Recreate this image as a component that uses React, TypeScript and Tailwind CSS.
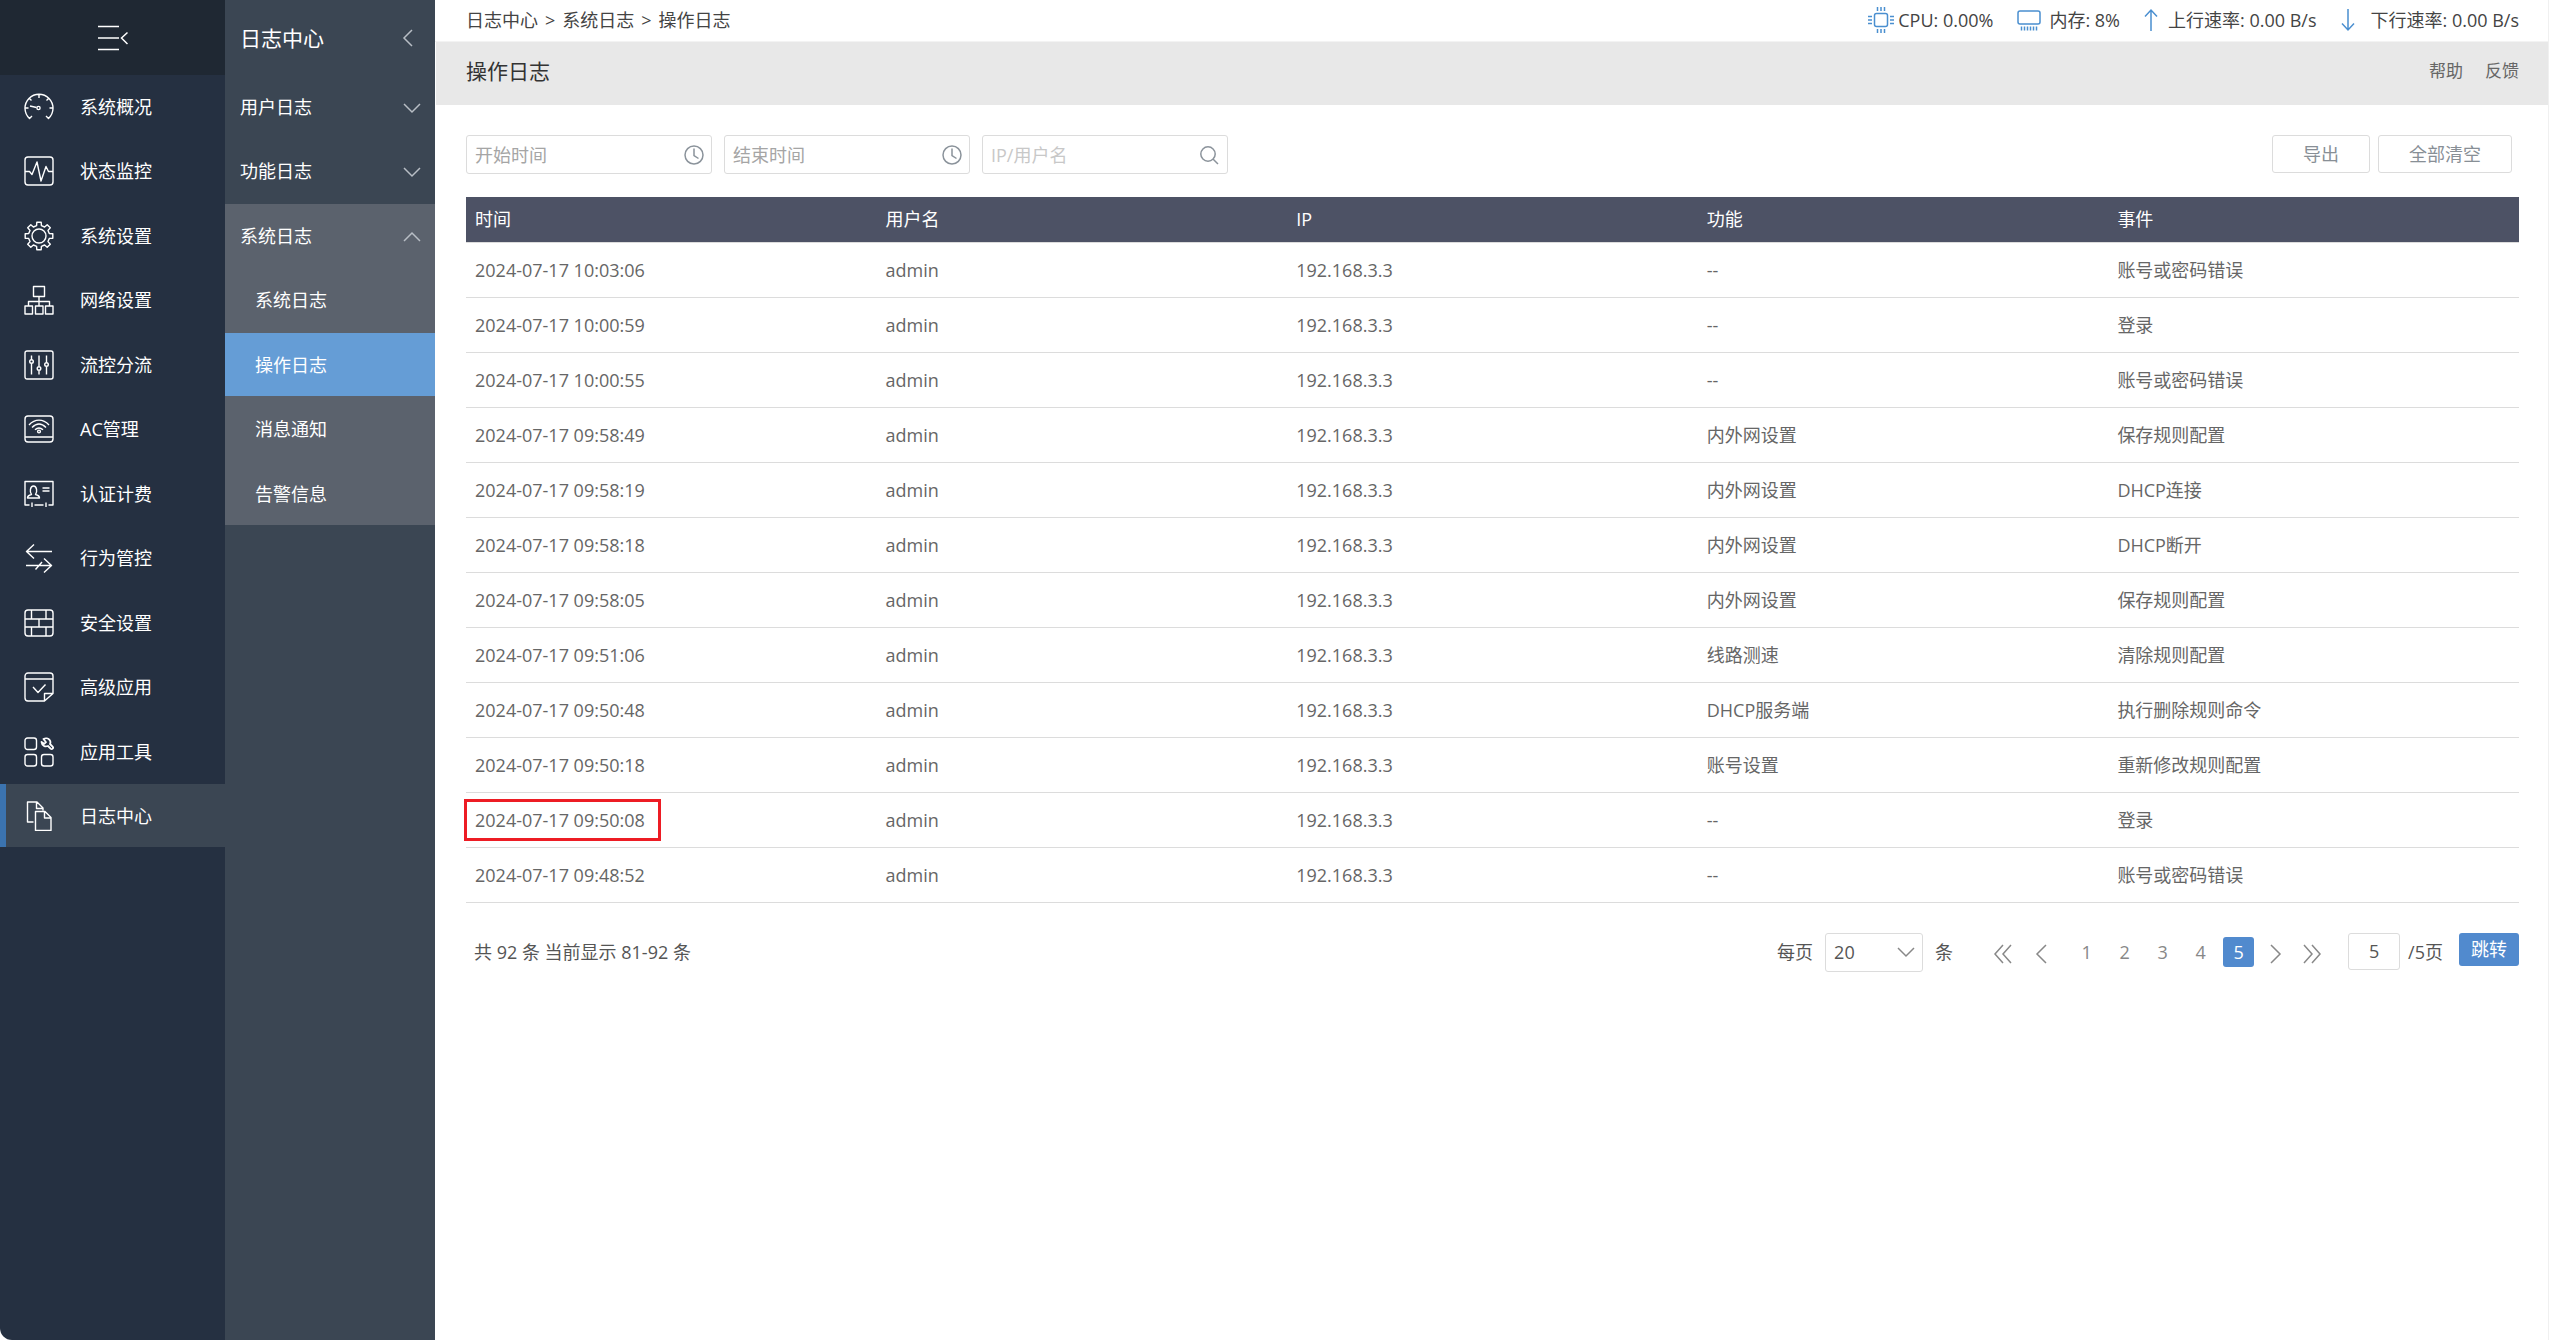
import type { ReactNode } from "react";

type Log = { time: string; user: string; ip: string; feature: string; event: string };

const LOGS: Log[] = [
  { time: "2024-07-17 10:03:06", user: "admin", ip: "192.168.3.3", feature: "--", event: "账号或密码错误" },
  { time: "2024-07-17 10:00:59", user: "admin", ip: "192.168.3.3", feature: "--", event: "登录" },
  { time: "2024-07-17 10:00:55", user: "admin", ip: "192.168.3.3", feature: "--", event: "账号或密码错误" },
  { time: "2024-07-17 09:58:49", user: "admin", ip: "192.168.3.3", feature: "内外网设置", event: "保存规则配置" },
  { time: "2024-07-17 09:58:19", user: "admin", ip: "192.168.3.3", feature: "内外网设置", event: "DHCP连接" },
  { time: "2024-07-17 09:58:18", user: "admin", ip: "192.168.3.3", feature: "内外网设置", event: "DHCP断开" },
  { time: "2024-07-17 09:58:05", user: "admin", ip: "192.168.3.3", feature: "内外网设置", event: "保存规则配置" },
  { time: "2024-07-17 09:51:06", user: "admin", ip: "192.168.3.3", feature: "线路测速", event: "清除规则配置" },
  { time: "2024-07-17 09:50:48", user: "admin", ip: "192.168.3.3", feature: "DHCP服务端", event: "执行删除规则命令" },
  { time: "2024-07-17 09:50:18", user: "admin", ip: "192.168.3.3", feature: "账号设置", event: "重新修改规则配置" },
  { time: "2024-07-17 09:50:08", user: "admin", ip: "192.168.3.3", feature: "--", event: "登录" },
  { time: "2024-07-17 09:48:52", user: "admin", ip: "192.168.3.3", feature: "--", event: "账号或密码错误" },
];

const MARKED_TIME = "2024-07-17 09:50:08";

const COLUMNS = ["时间", "用户名", "IP", "功能", "事件"];

const NAV: { label: string; icon: ReactNode }[] = [
  {
    label: "系统概况",
    icon: (
      <>
        <path d="M8 24 5.5 26.5A14 14 0 1 1 24.5 26.5L22 24M15 2v4M5.5 6.5l2 2M24.5 6.5l-2 2M1 16h3.5M29 16h-3.5M12.5 15.500 6 14" />
        <circle cx="14.5" cy="16" r="1.6" />
      </>
    ),
  },
  {
    label: "状态监控",
    icon: (
      <>
        <rect x="1" y="1" width="28" height="28" rx="3" />
        <path d="M1 15.5h4.5L8 18.5 13 6l4 19 5-14.5 2.5 5H29" />
      </>
    ),
  },
  {
    label: "系统设置",
    icon: (
      <>
        <circle cx="15" cy="15" r="7" />
        <path d="M12.6 4.7 12.8 1.2h4.4l.2 3.5L20.6 6l2.6-2.3 3.1 3.1L24 9.4l1.3 3.2 3.5.2v4.4l-3.5.2L24 20.6l2.3 2.6-3.1 3.1-2.6-2.3-3.2 1.3-.2 3.500h-4.4l-.2-3.500L9.400 24l-2.600 2.300-3.100-3.100L6 20.600l-1.300-3.200-3.500-.2v-4.400l3.500-.2L6 9.400 3.700 6.800l3.100-3.100L9.400 6z" />
      </>
    ),
  },
  {
    label: "网络设置",
    icon: <path d="M9.5 1.5h11v10h-11zM1 21h7.5v8H1zM11.5 21H19v8h-7.5zM21.5 21H29v8h-7.5zM15 11.5V21M4.5 21v-4.5h21V21" />,
  },
  {
    label: "流控分流",
    icon: (
      <>
        <rect x="1" y="1" width="28" height="28" rx="2" />
        <path d="M7.5 5.500v4M7.5 13.5v11M15 5.5V16M15 21v3.5M22.5 5.5v7M22.5 16.5v8" />
        <circle cx="7.5" cy="11.5" r="1.8" />
        <circle cx="15" cy="18.5" r="1.8" />
        <circle cx="22.5" cy="14.5" r="1.8" />
      </>
    ),
  },
  {
    label: "AC管理",
    icon: (
      <>
        <rect x="1" y="2" width="28" height="26" rx="3" />
        <path d="M1 23h28M5 11c6-6.5 14-6.5 20 0M8 13.5c4.5-4.5 9.5-4.5 14 0M11 15.8c2.5-2.3 5.5-2.3 8 0" />
        <circle cx="15" cy="17.5" r="1.4" />
      </>
    ),
  },
  {
    label: "认证计费",
    icon: (
      <>
        <path d="M5.5 26H1V2.5h28V26h-4.5M10.5 26h9M8 23.5V28M22 23.5V28M18.5 9h7M18.5 12h7" />
        <path d="M3.5 19c0-2.5 2-3 4-3.5-2-2.5-1.500-8.500 2-8.500s4 6 2 8.500c2 .5 4 1 4 3.500z" />
      </>
    ),
  },
  {
    label: "行为管控",
    icon: <path d="M28 8.5H2.5M10 1.5l-7.5 7 7.5 7M2 22.5h25.5M20 15.5l7.5 7-7.5 7M11.5 26.5 18 19" />,
  },
  {
    label: "安全设置",
    icon: (
      <>
        <rect x="1" y="2" width="28" height="26" rx="3" />
        <path d="M1 11h28M1 19h28M7.5 2v9M22 2v9M15 11v8M7.5 19v9M22 19v9" />
      </>
    ),
  },
  {
    label: "高级应用",
    icon: <path d="M20.5 29H4a3 3 0 0 1-3-3V4a3 3 0 0 1 3-3h22a3 3 0 0 1 3 3v17.5zM1 7h28M9 15l5 5.5 7.5-8M20.5 29v-7.5H29" />,
  },
  {
    label: "应用工具",
    icon: (
      <>
        <rect x="1" y="1" width="11.5" height="11.5" rx="2.5" />
        <rect x="1" y="17.5" width="11.5" height="11.5" rx="2.5" />
        <rect x="17.5" y="17.5" width="11.5" height="11.5" rx="2.5" />
        <path
          strokeWidth="1.8"
          d="M19.5 2c2-1 5-.8 6.300 1.200.8 1.300.7 2.800.2 3.800l2.600 2.600c1.300 1.500-.6 3.300-2 2L24 9c-2.500 1-6 .3-6.500-4l2.700 1.800 1.800-1.600z"
        />
      </>
    ),
  },
  {
    label: "日志中心",
    icon: <path d="M9.5 21h-6V1H13l6 6v2.5M12.5 1v6.5h6M11.5 10.5h9.500l6 6v13H11.5zM20.5 10.5V17H27" />,
  },
];

const ACTIVE_NAV = "日志中心";

const LOG_MENU = ["系统日志", "操作日志", "消息通知", "告警信息"];
const ACTIVE_LOG = "操作日志";

const CHEVRONS = {
  left: "M11 2 3 10l8 8",
  down: "M3 7l8 8 8-8",
  up: "M3 15l8-8 8 8",
};

function Chevron({ dir, className }: { dir: keyof typeof CHEVRONS; className: string }) {
  return (
    <svg viewBox="0 0 22 20" className={className} fill="none" stroke="currentColor" strokeWidth="1.5">
      <path d={CHEVRONS[dir]} />
    </svg>
  );
}

function PageArrow({ label, d, double }: { label: string; d: string; double?: boolean }) {
  return (
    <button aria-label={label} className="pt-1 text-[#888]">
      <svg
        viewBox={double ? "0 0 20 20" : "0 0 12 20"}
        className={double ? "h-5 w-5" : "h-5 w-3"}
        fill="none"
        stroke="currentColor"
        strokeWidth="1.5"
      >
        <path d={d} />
      </svg>
    </button>
  );
}

function Sidebar() {
  return (
    <aside className="w-[225px] shrink-0 rounded-bl-xl bg-[#253041] text-white">
      <button aria-label="收起菜单" className="flex h-[75px] w-full items-center justify-center bg-[#1f2833]">
        <svg viewBox="0 0 30 26" className="h-[26px] w-[30px]" fill="none" stroke="currentColor" strokeWidth="1.5">
          <path d="M0 1.5h21M0 13h21M0 24.5h21M29.5 7.500l-6 5.500 6 6" />
        </svg>
      </button>
      <nav>
        <ul>
          {NAV.map(({ label, icon }) => (
            <li key={label} className="mb-px even:mb-0.5">
              <a
                href="#"
                className={`flex h-[63px] items-center gap-[26px] ${
                  label === ACTIVE_NAV ? "border-l-6 border-[#3b73af] bg-[#3b4653] pl-[18px]" : "pl-6"
                }`}
              >
                <svg
                  viewBox="0 0 30 30"
                  className="size-[30px]"
                  fill="none"
                  stroke="currentColor"
                  strokeWidth="1.4"
                  strokeLinejoin="round"
                >
                  {icon}
                </svg>
                {label}
              </a>
            </li>
          ))}
        </ul>
      </nav>
    </aside>
  );
}

function SubMenu() {
  return (
    <aside className="w-[210px] shrink-0 bg-[#3b4653] text-white">
      <div className="flex h-[75px] items-center justify-between pr-3 pl-[15px] text-[21px]">
        日志中心
        <button aria-label="收起" className="text-[#b8bec5]">
          <Chevron dir="left" className="h-5 w-[22px]" />
        </button>
      </div>
      <button className="mb-px flex h-[63px] w-full items-center justify-between pr-3 pl-[15px]">
        用户日志
        <Chevron dir="down" className="h-5 w-[22px] text-[#b8bec5]" />
      </button>
      <button className="mb-0.5 flex h-[63px] w-full items-center justify-between pr-3 pl-[15px]">
        功能日志
        <Chevron dir="down" className="h-5 w-[22px] text-[#b8bec5]" />
      </button>
      <div className="bg-[#5b626d]">
        <button className="mb-px flex h-[63px] w-full items-center justify-between pr-3 pl-[15px]">
          系统日志
          <Chevron dir="up" className="h-5 w-[22px] text-[#b8bec5]" />
        </button>
        <ul>
          {LOG_MENU.map((label) => (
            <li key={label} className="mb-0.5 even:mb-px last:mb-0">
              <a
                href="#"
                className={`flex h-[63px] items-center pl-[30px] ${label === ACTIVE_LOG ? "bg-[#659dd6]" : ""}`}
              >
                {label}
              </a>
            </li>
          ))}
        </ul>
      </div>
    </aside>
  );
}

function TopBar() {
  return (
    <header className="flex h-[42px] items-center justify-between border-b border-[#f3f3f3] pr-[29px] pb-px pl-[31px] text-[#444]">
      <nav className="flex gap-[7px]">
        <a href="#">日志中心</a>
        <span>&gt;</span>
        <a href="#">系统日志</a>
        <span>&gt;</span>
        <a href="#">操作日志</a>
      </nav>
      <div className="flex gap-6">
        <span className="flex items-center gap-1">
          <svg viewBox="0 0 26 26" className="size-[26px] text-[#4a8fd0]" fill="none" stroke="currentColor" strokeWidth="1.5">
            <rect x="6.5" y="6.5" width="13" height="13" rx="2" />
            <path d="M9.5 0v4M13 0v4M16.500 0v4M9.5 22v4M13 22v4M16.5 22v4M0 9.5h4M0 13h4M0 16.5h4M22 9.5h4M22 13h4M22 16.5h4" />
          </svg>
          CPU: 0.00%
        </span>
        <span className="flex items-center gap-2">
          <svg viewBox="0 0 24 22" className="h-[22px] w-6 text-[#4a8fd0]" fill="none" stroke="currentColor" strokeWidth="1.5">
            <rect x="1" y="2" width="22" height="13" rx="2" />
            <path d="M4.500 17.5v4M7.500 17.5v4M10.500 17.5v4M13.500 17.5v4M16.500 17.5v4M19.500 17.5v4" />
          </svg>
          内存: 8%
        </span>
        <span className="flex items-center gap-2.5">
          <svg viewBox="0 0 14 24" className="h-6 w-3.5 text-[#4a8fd0]" fill="none" stroke="currentColor" strokeWidth="1.5">
            <path d="M7 23V2M1 8.5 7 2l6 6.5" />
          </svg>
          上行速率: 0.00 B/s
        </span>
        <span className="flex items-center gap-4">
          <svg viewBox="0 0 14 24" className="h-6 w-3.5 text-[#4a8fd0]" fill="none" stroke="currentColor" strokeWidth="1.5">
            <path d="M7 1v21M1 15.5 7 22l6-6.500" />
          </svg>
          下行速率: 0.00 B/s
        </span>
      </div>
    </header>
  );
}

function ClockIcon() {
  return (
    <svg viewBox="0 0 20 20" className="size-5 shrink-0 text-[#8b939b]" fill="none" stroke="currentColor" strokeWidth="1.5">
      <circle cx="10" cy="10" r="9" />
      <path d="M10 3.5v7l4.500 3" />
    </svg>
  );
}

function SearchIcon() {
  return (
    <svg viewBox="0 0 20 20" className="size-5 shrink-0 text-[#8b939b]" fill="none" stroke="currentColor" strokeWidth="1.5">
      <circle cx="8" cy="9" r="7.2" />
      <path d="M13 14l5 5" />
    </svg>
  );
}

function Filters() {
  const box = "flex h-[39px] w-[246px] items-center rounded-[3px] border border-[#dcdcdc] pr-[7px] pl-2";
  return (
    <div className="flex gap-3">
      <label className={box}>
        <input aria-label="开始时间" placeholder="开始时间" className="min-w-0 flex-1 outline-none placeholder:text-[#a5a5a5]" />
        <ClockIcon />
      </label>
      <label className={box}>
        <input aria-label="结束时间" placeholder="结束时间" className="min-w-0 flex-1 outline-none placeholder:text-[#a5a5a5]" />
        <ClockIcon />
      </label>
      <label className={box}>
        <input aria-label="IP/用户名" placeholder="IP/用户名" className="min-w-0 flex-1 outline-none placeholder:text-[#c8c8c8]" />
        <SearchIcon />
      </label>
      <div className="ml-auto flex gap-2 pr-[7px] text-[#888f96]">
        <button className="h-[38px] rounded-[3px] border border-[#dcdcdc] px-[30px]">导出</button>
        <button className="h-[38px] rounded-[3px] border border-[#dcdcdc] px-[30px]">全部清空</button>
      </div>
    </div>
  );
}

function LogTable() {
  return (
    <table className="mt-[23px] w-full table-fixed border-collapse text-left">
      <thead>
        <tr className="h-[45px] border-b border-[#dcdcdc] bg-[#4d5265] text-white">
          {COLUMNS.map((name) => (
            <th key={name} className="px-[9px] pb-px font-normal">
              {name}
            </th>
          ))}
        </tr>
      </thead>
      <tbody className="text-[#666]">
        {LOGS.map((log) => (
          <tr key={log.time} className="h-[55px] border-b border-[#dcdcdc]">
            <td className="px-[9px]">
              <span className="relative">
                {log.time}
                {log.time === MARKED_TIME && (
                  <span className="absolute -inset-y-[9px] -right-4 -left-[11px] border-3 border-[#ed1c24]" />
                )}
              </span>
            </td>
            <td className="px-[9px]">{log.user}</td>
            <td className="px-[9px]">{log.ip}</td>
            <td className="px-[9px]">{log.feature}</td>
            <td className="px-[9px]">{log.event}</td>
          </tr>
        ))}
      </tbody>
    </table>
  );
}

function Pagination() {
  return (
    <div className="mt-[30px] flex items-start justify-between pl-2 text-[#555]">
      <p className="leading-[39px]">共 92 条 当前显示 81-92 条</p>
      <div className="flex items-start">
        <label htmlFor="page-size" className="mr-3 leading-[39px]">
          每页
        </label>
        <div className="relative">
          <select id="page-size" defaultValue="20" className="h-[39px] w-[98px] appearance-none rounded-[3px] border border-[#dcdcdc] bg-white pl-2">
            <option>20</option>
          </select>
          <Chevron dir="down" className="pointer-events-none absolute top-2 right-1.5 h-5 w-[22px] text-[#888]" />
        </div>
        <span className="ml-3 leading-[39px]">条</span>
        <div className="ml-10 flex h-[39px] items-center">
          <PageArrow label="首页" double d="M10 1 2 10l8 9M18 1l-8 9 8 9" />
          <div className="ml-[22px] flex">
            <PageArrow label="上一页" d="M11 1 2 10l9 9" />
          </div>
          <div className="mr-4 ml-6 flex gap-[7px] text-[#888]">
            {[1, 2, 3, 4, 5].map((page) => (
              <button key={page} className={`h-[30px] w-[31px] rounded-[3px] ${page === 5 ? "bg-[#518ace] text-white" : ""}`}>
                {page}
              </button>
            ))}
          </div>
          <PageArrow label="下一页" d="M1 1l9 9-9 9" />
          <div className="ml-5 flex">
            <PageArrow label="末页" double d="M2 1l8 9-8 9M10 1l8 9-8 9" />
          </div>
        </div>
        <input aria-label="页码" defaultValue="5" className="ml-[26px] h-[37px] w-[52px] rounded-[3px] border border-[#dcdcdc] text-center" />
        <span className="ml-2 leading-[39px]">/5页</span>
        <button className="ml-4 h-[33px] w-[60px] rounded-[3px] bg-[#518ace] text-white">跳转</button>
      </div>
    </div>
  );
}

export default function App() {
  return (
    <div className="flex min-h-screen bg-white font-['Open_Sans','Noto_Sans_CJK_SC',sans-serif] text-lg leading-6">
      <Sidebar />
      <SubMenu />
      <main className="min-w-0 flex-1 border-r border-[#f0f0f0]">
        <TopBar />
        <div className="ml-px flex h-[63px] items-center justify-between bg-[#e8e8e8] pr-[29px] pb-1.5 pl-[30px]">
          <h1 className="text-[21px] text-[#333]">操作日志</h1>
          <div className="flex gap-[22px] text-[17px] text-[#666]">
            <a href="#">帮助</a>
            <a href="#">反馈</a>
          </div>
        </div>
        <div className="pt-[30px] pr-[29px] pl-[31px]">
          <Filters />
          <LogTable />
          <Pagination />
        </div>
      </main>
    </div>
  );
}
